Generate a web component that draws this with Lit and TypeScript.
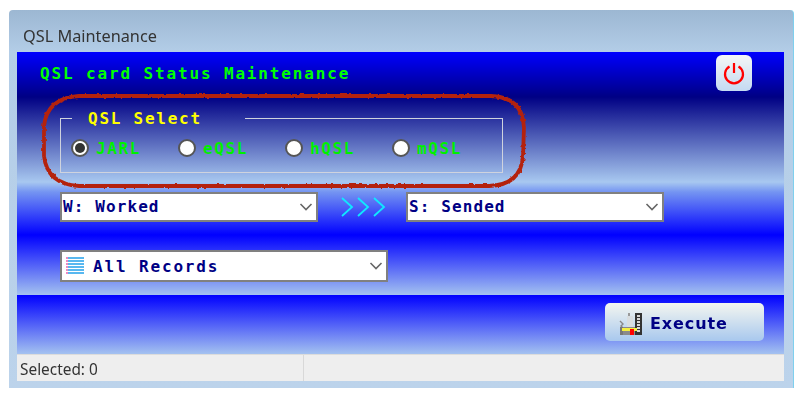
import { LitElement, html, css, svg } from "lit";
import { customElement } from "lit/decorators.js";

const chevron = html`<svg class="chev" width="14" height="8" viewBox="0 0 14 8"><path d="M1.5 1 L7 6.5 L12.5 1" fill="none" stroke="#666" stroke-width="1.6"/></svg>`;

@customElement("app-root")
export class AppRoot extends LitElement {
  static styles = css`
    :host { display: block; width: 800px; height: 400px; background: #fff; overflow: hidden; }
    * { box-sizing: border-box; }
    .blur { width: 800px; height: 400px; padding: 10px 6px 12px 9px; filter: blur(0.45px); }
    .window {
      height: 378px; display: flex; flex-direction: column; padding: 0 9px 7px 8px;
      border-radius: 4px 4px 0 0; border-right: 1px solid #7fd0ee;
      background: linear-gradient(#9cb7d2 0, #b3cde7 42px, #bcd3eb 100%);
    }
    .caption { height: 42px; display: flex; align-items: center; padding: 9px 0 0 6px;
      font: 16.3px "Noto Sans", sans-serif; color: #333; }
    .main {
      position: relative; height: 243px; display: flex; flex-direction: column; padding: 3px 32px 13px 23px;
      background: linear-gradient(#0000ff 0, #000084 18.5%, #a8c8f0 53.5%, #7494f2 57.6%, #0000ff 75.3%, #a4c2f0 100%);
    }
    .mono { font-family: "DejaVu Sans Mono", monospace; }
    .head { display: flex; justify-content: space-between; align-items: center; height: 36px; }
    .title { font-size: 16px; font-weight: 700; letter-spacing: 1.86px; color: #00ff00; }
    .power { width: 36px; height: 36px; border: 0; padding: 0; border-radius: 6px; display: flex; align-items: center; justify-content: center;
      background: linear-gradient(#f4f6f6, #c4daf2); }
    fieldset { width: 443px; height: 65px; margin: 17px 0 19px 20px; padding: 0 0 0 10px; border: 1px solid #cfd3de; display: flex; }
    legend { height: 20px; margin-left: 1px; padding: 1px 43px 0 16px; font-size: 16px; font-weight: 700; line-height: 20px; letter-spacing: 1.75px; color: #ffff00; }
    .radios { display: grid; grid-template-columns: repeat(4, 107px); width: 100%; padding-top: 10px; }
    .radio { display: flex; align-items: center; gap: 7px; height: 20px; font-size: 16px; font-weight: 700; letter-spacing: 1.6px; color: #00f000; }
    .dot { width: 18px; height: 18px; border-radius: 50%; background: #fff; border: 2px solid #555; flex: none; display: flex; align-items: center; justify-content: center; }
    .dot.on::after { content: ""; width: 10px; height: 10px; border-radius: 50%; background: #333; }
    .row { display: flex; align-items: center; margin-left: 20px; }
    .select { height: 30px; width: 258px; background: #fff; border: 2px solid #808080; display: flex; align-items: center; justify-content: space-between;
      padding: 0 3px 0 1px; font-size: 16px; font-weight: 700; letter-spacing: 1.1px; color: #000084; }
    .select > span { padding-bottom: 2px; }
    .arrows { width: 88px; display: flex; justify-content: center; padding-left: 3px; }
    .all { width: 328px; height: 32px; margin: 28px 0 0 20px; font-size: 16px; letter-spacing: 1.85px; padding-left: 4px; }
    .select.all > .lbl { display: flex; align-items: center; gap: 9px; padding-bottom: 0; }
    .bottom { height: 59px; display: flex; align-items: flex-start; justify-content: flex-end; padding: 8px 20px 0 0;
      background: linear-gradient(#0000ff 0, #a4c2f0 100%); }
    .exec { width: 159px; height: 38px; border: 0; padding: 3px 0 0 14px; border-radius: 5px; display: flex; align-items: center; gap: 7px;
      background: linear-gradient(#f4f6f0, #a8c8ee); font: 700 16px "DejaVu Sans", sans-serif; letter-spacing: 0.9px; color: #000084; }
    .status { height: 27px; display: grid; grid-template-columns: 287px 1fr; background: #eee; border-top: 1px solid #dcdcdc;
      font: 15.4px "Noto Sans", sans-serif; color: #333; }
    .status div { display: flex; align-items: center; padding: 3px 0 0 3px; }
    .status div:first-child { border-right: 1px solid #d8d8d8; }
    .ring { position: absolute; left: 0; top: 0; pointer-events: none; }
  `;

  render() {
    const radios = ["JARL", "eQSL", "hQSL", "mQSL"];
    return html`<div class="blur"><div class="window">
      <div class="caption">QSL Maintenance</div>
      <div class="main">
        <div class="head">
          <span class="title mono">QSL card Status Maintenance</span>
          <button class="power" aria-label="Close">
            <svg width="22" height="24" viewBox="0 0 22 24"><path d="M6.5 5.5 A9 9 0 1 0 15.5 5.5" fill="none" stroke="#f00" stroke-width="2.2"/><path d="M11 2 V12" stroke="#f00" stroke-width="2.2"/></svg>
          </button>
        </div>
        <fieldset class="mono">
          <legend>QSL Select</legend>
          <div class="radios">
            ${radios.map((r, i) => html`<div class="radio"><span class="dot ${i === 0 ? "on" : ""}"></span>${r}</div>`)}
          </div>
        </fieldset>
        <div class="row mono">
          <div class="select"><span>W: Worked</span>${chevron}</div>
          <div class="arrows"><svg width="46" height="20" viewBox="0 0 46 20">
            ${[1, 17, 33].map((x) => svg`<path d="M${x} 1 L${x + 10} 10 L${x} 19" fill="none" stroke="#10e8ff" stroke-width="1.8"/>`)}
          </svg></div>
          <div class="select"><span>S: Sended</span>${chevron}</div>
        </div>
        <div class="select all mono">
          <span class="lbl">
            <svg width="18" height="18" viewBox="0 0 18 18">
              ${[1, 4, 7, 10, 13, 16].map((y) => svg`<rect x="2" y="${y - 1}" width="16" height="2" fill="#58b8f0"/><rect x="0" y="${y - 1}" width="2" height="2" fill="#f088c0"/>`)}
            </svg>All Records</span>${chevron}
        </div>
        <svg class="ring" width="767" height="243" viewBox="0 0 767 243">
          <defs><filter id="rough" filterUnits="userSpaceOnUse" x="0" y="20" width="540" height="140">
            <feTurbulence type="fractalNoise" baseFrequency="0.3" numOctaves="1" seed="4" result="n"/>
            <feDisplacementMap in="SourceGraphic" in2="n" scale="3" xChannelSelector="R" yChannelSelector="G"/>
          </filter></defs>
          <path d="M62 44 H474 Q506 45 507 76 L506 104 Q504 133 472 134 L62 134 Q30 132 27 104 L27 74 Q30 46 62 44 Z" fill="none" stroke="#b4240e" stroke-width="3.8" filter="url(#rough)"/>
        </svg>
      </div>
      <div class="bottom">
        <button class="exec">
          <svg width="24" height="24" viewBox="0 0 24 24">
            <path d="M1 9 L4 12 L2 14 L4 16" fill="none" stroke="#888" stroke-width="1.4"/>
            <rect x="1" y="15" width="3" height="8" fill="#777"/>
            <rect x="9" y="1" width="2" height="3" fill="#999"/>
            <rect x="8" y="4" width="6" height="11" fill="#d8dde0"/>
            <rect x="4" y="15" width="12" height="8" fill="#8a8a8a"/>
            <rect x="16" y="1" width="7" height="22" fill="#333"/>
            ${[3, 6, 9, 12, 15, 18].map((y) => svg`<rect x="18" y="${y}" width="3" height="2" fill="#d8d8d8"/>`)}
            <rect x="3" y="16" width="15" height="3" fill="#f4f040"/>
            <rect x="11" y="17" width="4" height="6" fill="#f00"/>
          </svg>Execute
        </button>
      </div>
      <div class="status"><div>Selected: 0</div><div></div></div>
    </div></div>`;
  }
}
